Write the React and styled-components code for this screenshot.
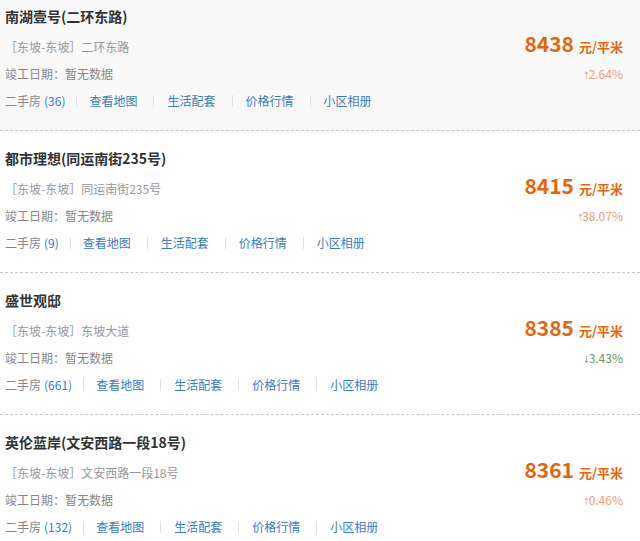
import React from 'react'
import styled, {createGlobalStyle} from 'styled-components'

const Global = createGlobalStyle`
  body {
    margin: 0;
    background: #ffffff;
    font-family: "Noto Sans CJK SC", "Noto Sans", sans-serif;
  }
`

const List = styled.div`
  width: 640px;
`

const Item = styled.div`
  background: ${p => p.$shaded ? '#f9f9f9' : '#ffffff'};
  border-bottom: 1px dashed #c8c8c8;
  padding: ${p => p.$first ? '2px' : '13px'} 17px 16px 5px;
`

const Title = styled.div`
  font-size: 14px;
  font-weight: bold;
  color: #333333;
  line-height: 28px;
  margin-bottom: 3px;
`

const Body = styled.div`
  display: flex;
  justify-content: space-between;
`

const Left = styled.div`
  display: flex;
  flex-direction: column;
`

const Line = styled.div`
  font-size: 12px;
  line-height: 27px;
  color: ${p => p.$light ? '#999999' : '#888888'};
  white-space: nowrap;
`

const Links = styled.div`
  display: flex;
  align-items: center;
  font-size: 12px;
  line-height: 27px;
  color: #888888;
  white-space: nowrap;
`

const Count = styled.span`
  color: #3d7cc0;
  margin-left: 3px;
`

const Link = styled.span`
  color: #3d7cc0;
`

const Sep = styled.span`
  display: inline-block;
  width: 1px;
  height: 12px;
  background: #e2e2e2;
  margin: ${p => p.$first ? '0 12px 0 11px' : '0 13px 0 16px'};
`

const Right = styled.div`
  display: flex;
  flex-direction: column;
  align-items: flex-end;
`

const Price = styled.div`
  display: flex;
  align-items: baseline;
  height: 27px;
  margin-top: -3px;
  margin-bottom: 3px;
  color: #e5660f;
  font-weight: bold;
  white-space: nowrap;
`

const Num = styled.span`
  font-size: 21px;
  line-height: 27px;
`

const Unit = styled.span`
  font-size: 13px;
  line-height: 27px;
  margin-left: 5px;
`

const Change = styled.div`
  font-size: 12px;
  line-height: 27px;
  height: 27px;
  color: ${p => p.$down ? '#6b956b' : '#e8a27e'};
`

const Arrow = styled.span`
  display: inline-block;
  font-family: "DejaVu Sans", sans-serif;
  font-size: 10px;
  margin-right: -2px;
  transform: scaleX(0.7);
`

const data = [
  {name: '南湖壹号(二环东路)', addr: '二环东路', count: 36, price: 8438, change: '2.64%', down: false},
  {name: '都市理想(同运南街235号)', addr: '同运南街235号', count: 9, price: 8415, change: '38.07%', down: false},
  {name: '盛世观邸', addr: '东坡大道', count: 661, price: 8385, change: '3.43%', down: true},
  {name: '英伦蓝岸(文安西路一段18号)', addr: '文安西路一段18号', count: 132, price: 8361, change: '0.46%', down: false},
]

const links = ['查看地图', '生活配套', '价格行情', '小区相册']

export default function App() {
  return (
    <List>
      <Global/>
      {data.map((d, i) => (
        <Item key={d.name} $first={i === 0} $shaded={i === 0}>
          <Title>{d.name}</Title>
          <Body>
            <Left>
              <Line $light>［东坡-东坡］{d.addr}</Line>
              <Line>竣工日期：暂无数据</Line>
              <Links>
                二手房<Count>({d.count})</Count>
                {links.map((l, j) => (
                  <React.Fragment key={l}>
                    <Sep $first={j === 0}/>
                    <Link>{l}</Link>
                  </React.Fragment>
                ))}
              </Links>
            </Left>
            <Right>
              <Price><Num>{d.price}</Num><Unit>元/平米</Unit></Price>
              <Change $down={d.down}><Arrow>{d.down ? '↓' : '↑'}</Arrow>{d.change}</Change>
            </Right>
          </Body>
        </Item>
      ))}
    </List>
  )
}
